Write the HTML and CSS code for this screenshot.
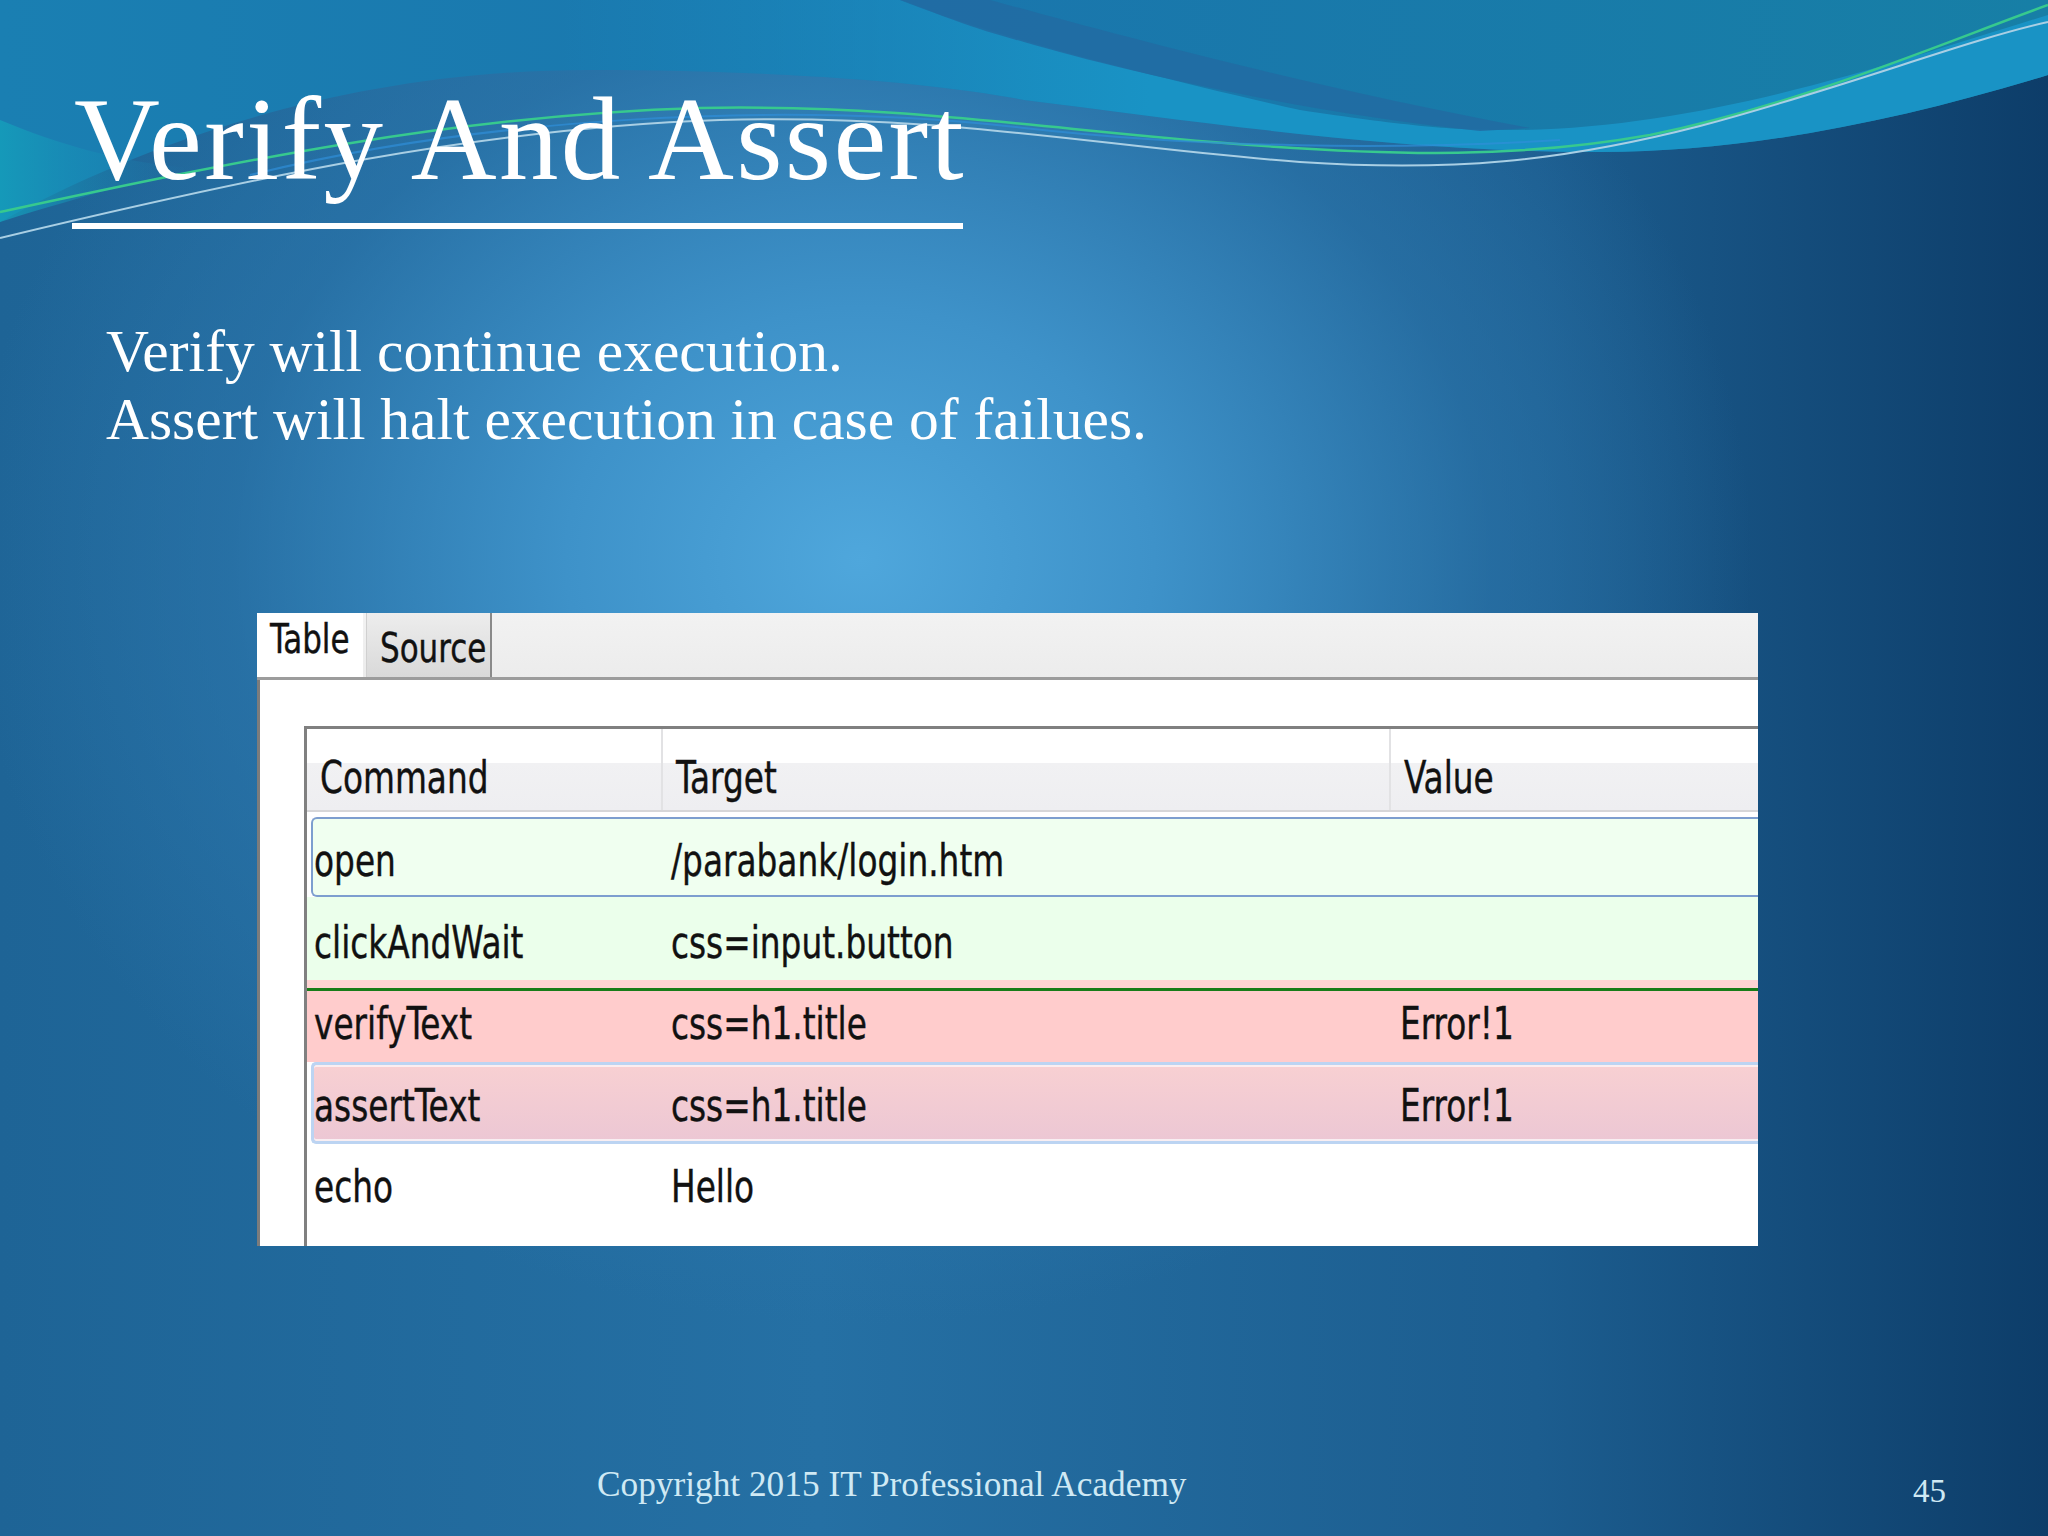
FILE: index.html
```html
<!DOCTYPE html>
<html>
<head>
<meta charset="utf-8">
<title>Verify And Assert</title>
<link rel="stylesheet" href="styles.css">
</head>
<body>
<div class="slide">
  <svg class="waves" viewBox="0 0 2048 420" width="2048" height="420" aria-hidden="true">
    <defs>
      <linearGradient id="topfill" x1="0" y1="0" x2="1" y2="0">
        <stop offset="0" stop-color="#1a7fb2"/>
        <stop offset="0.45" stop-color="#1a76ad"/>
        <stop offset="1" stop-color="#177fa6"/>
      </linearGradient>
      <linearGradient id="bandfill" gradientUnits="userSpaceOnUse" x1="560" y1="0" x2="1150" y2="0">
        <stop offset="0" stop-color="#1a90c4" stop-opacity="0"/>
        <stop offset="1" stop-color="#1993c5" stop-opacity="1"/>
      </linearGradient>
      <linearGradient id="wedge" x1="0" y1="0" x2="1" y2="0">
        <stop offset="0" stop-color="#14a0bb"/>
        <stop offset="1" stop-color="#1a82b4" stop-opacity="0"/>
      </linearGradient>
    </defs>
    <path d="M0,0 L2048,0 L2048,75 C1900,120 1750,152 1600,152 C1400,152 1200,122 1024,100 C950,85 800,70 590,70 C350,70 150,140 0,222 Z" fill="url(#topfill)"/>
    <path d="M0,120 C60,145 120,162 190,168 C120,186 50,206 0,222 Z" fill="url(#wedge)" opacity="0.8"/>
    <path d="M560,0 L900,0 C960,25 1120,70 1300,110 C1400,125 1450,130 1500,130 C1700,132 1900,60 2048,15 L2048,75 C1900,120 1750,152 1600,152 C1400,152 1200,122 1024,100 C950,85 800,70 590,70 L560,70 Z" fill="url(#bandfill)"/>
    <path d="M900,0 L990,0 C1100,30 1300,85 1530,128 L1480,131 C1300,112 1120,70 1024,42 C960,25 930,10 900,0 Z" fill="#226ba2" opacity="0.85"/>
    <path d="M0,212 C220,165 450,115 700,108 C900,104 1050,130 1250,145 C1400,156 1520,158 1650,135 C1800,105 1950,40 2048,5" fill="none" stroke="#37c98e" stroke-width="2.5"/>
    <path d="M0,238 C250,178 480,128 720,120 C950,114 1100,147 1300,162 C1450,172 1560,162 1700,126 C1850,86 1960,42 2048,22" fill="none" stroke="#a9cfe4" stroke-width="2"/>
    <path d="M250,175 C480,118 780,100 1024,128 C1200,148 1400,150 1560,140" fill="none" stroke="#2f8fd8" stroke-width="2" opacity="0.7"/>
  </svg>

  <header class="title-block">
    <h1 class="title">Verify And Assert</h1>
    <div class="rule"></div>
  </header>

  <div class="body-text">
    <p>Verify will continue execution.</p>
    <p>Assert will halt execution in case of failues.</p>
  </div>

  <div class="shot">
    <div class="tabs">
      <div class="tab tab-active"><span class="tt">Table</span></div>
      <div class="tab tab-idle"><span class="tt">Source</span></div>
    </div>
    <div class="sheet">
      <div class="grid">
        <div class="row head">
          <div class="cell c1"><span class="t">Command</span></div>
          <div class="cell c2"><span class="t">Target</span></div>
          <div class="cell c3"><span class="t">Value</span></div>
        </div>
        <div class="head-gap"></div>
        <div class="row r-open">
          <div class="cell c1"><span class="t">open</span></div>
          <div class="cell c2"><span class="t">/parabank/login.htm</span></div>
          <div class="cell c3"></div>
        </div>
        <div class="row r-click">
          <div class="cell c1"><span class="t">clickAndWait</span></div>
          <div class="cell c2"><span class="t">css=input.button</span></div>
          <div class="cell c3"></div>
        </div>
        <div class="row r-verify">
          <div class="cell c1"><span class="t">verifyText</span></div>
          <div class="cell c2"><span class="t">css=h1.title</span></div>
          <div class="cell c3"><span class="t">Error!1</span></div>
        </div>
        <div class="row r-assert">
          <div class="cell c1"><span class="t">assertText</span></div>
          <div class="cell c2"><span class="t">css=h1.title</span></div>
          <div class="cell c3"><span class="t">Error!1</span></div>
        </div>
        <div class="row r-echo">
          <div class="cell c1"><span class="t">echo</span></div>
          <div class="cell c2"><span class="t">Hello</span></div>
          <div class="cell c3"></div>
        </div>
      </div>
    </div>
  </div>

  <footer class="footer">
    <span class="copyright">Copyright 2015 IT Professional Academy</span>
    <span class="pageno">45</span>
  </footer>
</div>
</body>
</html>
```

FILE: styles.css
```css
html, body {
  margin: 0;
  padding: 0;
}

body {
  width: 2048px;
  height: 1536px;
  overflow: hidden;
}

.slide {
  position: relative;
  width: 2048px;
  height: 1536px;
  overflow: hidden;
  display: flex;
  flex-direction: column;
  font-family: "Liberation Serif", "DejaVu Serif", serif;
  color: #ffffff;
  background:
    radial-gradient(ellipse 1050px 900px at 860px 560px, #4fa7dc 0%, #3e92c9 28%, rgba(44, 118, 172, 0.6) 60%, rgba(30, 95, 145, 0) 85%),
    linear-gradient(90deg, #1e6496 0%, #2570a4 40%, #1c5d8f 75%, #0d3d69 100%);
}

.waves {
  position: absolute;
  left: 0;
  top: 0;
  z-index: 0;
}

.title-block,
.body-text,
.shot,
.footer {
  position: relative;
  z-index: 1;
}

.title-block {
  padding: 80px 0 0 72px;
  width: 891px;
}

.title {
  margin: 0 0 0 2px;
  font-size: 119px;
  line-height: 119px;
  font-weight: normal;
  letter-spacing: 2.3px;
  white-space: nowrap;
}

.rule {
  margin-top: 24px;
  height: 6px;
  width: 891px;
  background: #ffffff;
}

.body-text {
  margin: 88px 0 0 106px;
  font-size: 59.5px;
  line-height: 68px;
}

.body-text p {
  margin: 0;
}

/* screenshot panel */
.shot {
  margin: 160px 0 0 257px;
  width: 1501px;
  height: 633px;
  background: #ffffff;
  display: flex;
  flex-direction: column;
  font-family: "DejaVu Sans Condensed", "DejaVu Sans", sans-serif;
  color: #111111;
}

.t,
.tt {
  display: inline-block;
  transform-origin: 0 50%;
  white-space: nowrap;
  -webkit-text-stroke: 0.4px #111111;
}

.t {
  transform: scaleX(0.81);
}

.tt {
  transform: scaleX(0.86);
}

.tabs {
  height: 64px;
  background: linear-gradient(#f2f2f2, #ececec);
  border-bottom: 3px solid #9c9c9c;
  display: flex;
}

.tab {
  font-size: 40px;
  line-height: 40px;
  padding-left: 13px;
  box-sizing: border-box;
}

.tab-active {
  width: 106px;
  background: #ffffff;
  padding-top: 6px;
}

.tab-idle {
  width: 126px;
  margin-left: 3px;
  padding-top: 15px;
  background: linear-gradient(#ededed, #d9d9d9);
  border-right: 2px solid #8a8a8a;
  border-left: 1px solid #d0d0d0;
}

.sheet {
  flex: 1;
  border-left: 3px solid #7c7c7c;
  padding: 46px 0 0 44px;
  display: flex;
}

.grid {
  flex: 1;
  border-top: 3px solid #808080;
  border-left: 3px solid #808080;
  display: flex;
  flex-direction: column;
}

.row {
  display: grid;
  grid-template-columns: 356px 728px 1fr;
  font-size: 45px;
  line-height: 45px;
  white-space: nowrap;
}

.cell {
  padding-left: 7px;
}

.c2 {
  padding-left: 8px;
}

.c3 {
  padding-left: 9px;
}

.head {
  height: 83px;
  box-sizing: border-box;
  border-bottom: 2px solid #d6d6d8;
  background: linear-gradient(#ffffff 0, #ffffff 42%, #f1f1f3 42%, #eeeef1 100%);
}

.head .cell {
  padding-top: 26px;
  padding-left: 13px;
}

.head .c1,
.head .c2 {
  border-right: 2px solid #e2e2e4;
}

.head .c2 {
  padding-left: 13px;
}

.head-gap {
  height: 5px;
  background: #ffffff;
}

.r-open {
  height: 80px;
  box-sizing: border-box;
  margin-left: 4px;
  border: 2px solid #7d9ecf;
  border-right: none;
  border-radius: 6px 0 0 6px;
  background: #f0fff0;
  grid-template-columns: 350px 728px 1fr;
}

.r-open .cell {
  padding-top: 19px;
}

.r-open .c1 {
  padding-left: 1px;
}

.r-click {
  height: 91px;
  box-sizing: border-box;
  background: #ebffeb;
  border-bottom: 8px solid #ffd3d3;
}

.r-click .cell {
  padding-top: 23px;
}

.r-verify {
  height: 74px;
  box-sizing: border-box;
  border-top: 3px solid #187c18;
  background: #ffcccc;
}

.r-verify .cell {
  padding-top: 10px;
}

.r-assert {
  height: 82px;
  box-sizing: border-box;
  margin-left: 4px;
  border: 3px solid #bcd4f2;
  border-right: none;
  border-radius: 5px 0 0 5px;
  background: linear-gradient(#f8d0d2, #ecc7d4);
  box-shadow: inset 0 2px 0 #fbeef0, inset 0 -2px 0 #f8eef2;
  grid-template-columns: 349px 728px 1fr;
}

.r-assert .cell {
  padding-top: 18px;
}

.r-assert .c1 {
  padding-left: 0;
}

.r-echo {
  flex: 1;
  background: #ffffff;
}

.r-echo .cell {
  padding-top: 20px;
}

/* footer */
.footer {
  margin-top: 219px;
  display: flex;
  align-items: flex-start;
  padding-left: 597px;
  padding-right: 102px;
  color: #cfe9f4;
}

.copyright {
  font-size: 35.3px;
  line-height: 40px;
  white-space: nowrap;
}

.pageno {
  margin-left: auto;
  font-size: 33px;
  line-height: 40px;
  padding-top: 6px;
}
```
